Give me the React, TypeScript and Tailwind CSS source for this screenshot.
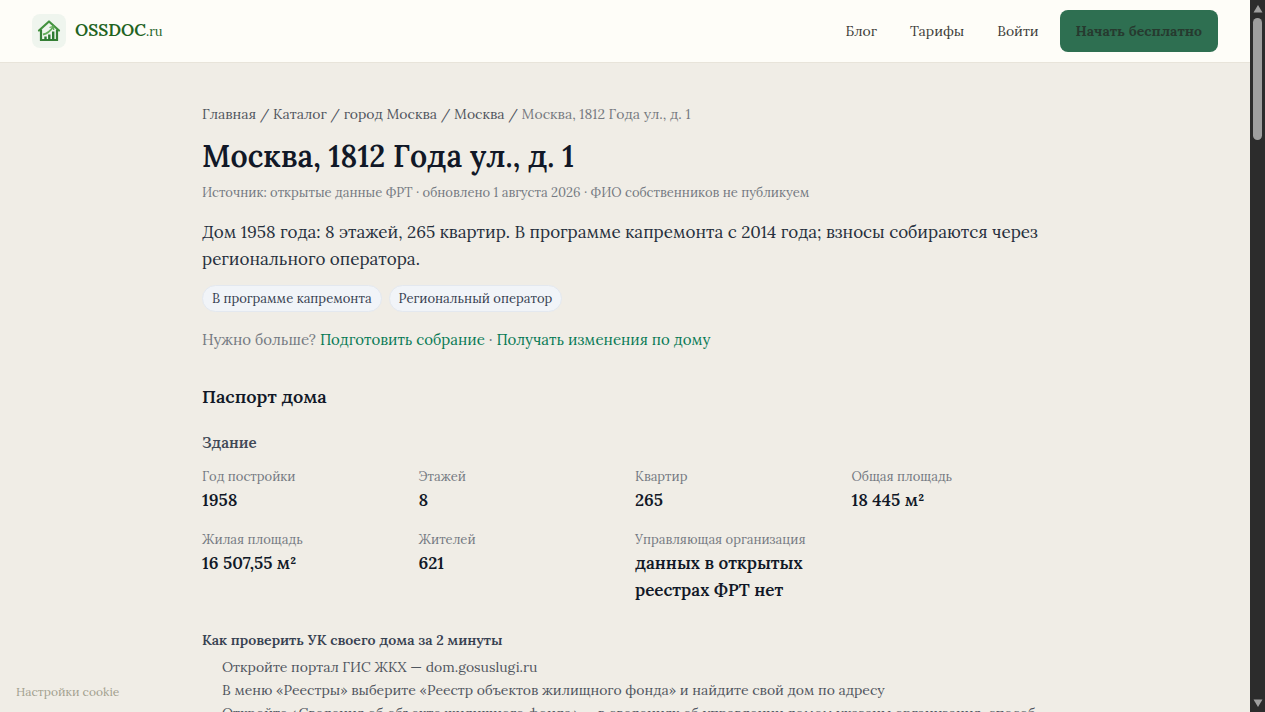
const navLinks = [
    { label: "Блог", href: "#blog" },
    { label: "Тарифы", href: "#pricing" },
    { label: "Войти", href: "#login" },
];

const crumbs = [
    { label: "Главная", href: "#home" },
    { label: "Каталог", href: "#catalog" },
    { label: "город Москва", href: "#region" },
    { label: "Москва", href: "#city" },
];

const tags = ["В программе капремонта", "Региональный оператор"];

const facts = [
    { label: "Год постройки", value: "1958" },
    { label: "Этажей", value: "8" },
    { label: "Квартир", value: "265" },
    { label: "Общая площадь", value: "18 445 м²" },
    { label: "Жилая площадь", value: "16 507,55 м²" },
    { label: "Жителей", value: "621" },
    { label: "Управляющая организация", value: "данных в открытых реестрах ФРТ нет" },
];

const steps = [
    "Откройте портал ГИС ЖКХ — dom.gosuslugi.ru",
    "В меню «Реестры» выберите «Реестр объектов жилищного фонда» и найдите свой дом по адресу",
    "Откройте «Сведения об объекте жилищного фонда» — в сведениях об управлении домом указаны организация, способ",
];

const Logo = () => (
    <a href="#home" className="flex items-center gap-[9px]">
        <span className="flex size-[34px] items-center justify-center rounded-lg bg-[#eff5ee]">
            <svg viewBox="0 0 24 24" className="size-6" fill="none" aria-hidden="true">
                <path d="M2 11.500 12 2.500l10 9" stroke="#43923f" strokeWidth="2.200" strokeLinejoin="round" strokeLinecap="round" />
                <path d="M4 10.500v10.500h16V10.500" stroke="#357f35" strokeWidth="2.200" />
                <path d="M8.500 21v-3.500M12.300 21v-5.500M16.200 21v-8.500" stroke="#2d7a31" strokeWidth="2.400" />
                <path d="M6 15.500c4-.8 7.500-3.500 10.500-8" stroke="#63ad5a" strokeWidth="1.800" />
                <path d="m12.500 8.500 4-1.200.2 3.700" stroke="#63ad5a" strokeWidth="1.300" />
            </svg>
        </span>
        <span className="text-[17px] leading-6 font-semibold text-[#22631f]">
            OSSDOC<span className="text-[13px] font-normal">.ru</span>
        </span>
    </a>
);

const Header = () => (
    <header className="flex h-[63px] shrink-0 items-center justify-between border-b border-[#e8e4da] bg-[#fefdf8] px-8">
        <Logo />
        <nav className="flex items-center text-[14px] text-[#3d3d3a]">
            {navLinks.map((l) => (
                <a key={l.label} href={l.href} className="mr-[33px] last-of-type:mr-0">
                    {l.label}
                </a>
            ))}
            <button className="ml-[21px] h-[42px] rounded-lg bg-[#2e6f51] px-4 font-bold text-[#263a2f]">
                Начать бесплатно
            </button>
        </nav>
    </header>
);

// Dark scroll rail along the right edge of the window
const ScrollRail = () => (
    <div className="flex w-[15px] shrink-0 flex-col items-center bg-[#2c2c2c] py-1" aria-hidden="true">
        <svg viewBox="0 0 10 10" className="size-2.5" fill="#9f9f9f">
            <path d="M5 1 9.500 8.500h-9z" />
        </svg>
        <div className="mt-1 h-[122px] w-[9px] rounded-full bg-[#9f9f9f]" />
        <svg viewBox="0 0 10 10" className="mt-auto size-2.5" fill="#9f9f9f">
            <path d="M5 9 .5 1.500h9z" />
        </svg>
    </div>
);

const App = () => (
    <div className="flex h-screen overflow-hidden bg-[#f0ede6] font-['Lora','Liberation_Serif',serif]">
        <div className="relative flex min-w-0 flex-1 flex-col overflow-hidden">
            <Header />

            <main className="mx-auto w-full max-w-[846px] pt-[39px]">
                <nav className="text-[14px] leading-6 text-[#767a80]">
                    {crumbs.map((c) => (
                        <span key={c.label} className="text-[#50565e]">
                            <a href={c.href}>{c.label}</a>
                            {" / "}
                        </span>
                    ))}
                    <span>Москва, 1812 Года ул., д. 1</span>
                </nav>

                <h1 className="mt-[11px] text-[30px] leading-[38px] font-semibold text-[#111827]">
                    Москва, 1812 Года ул., д. 1
                </h1>
                <p className="mt-2 text-[13px] leading-5 text-[#757a82]">
                    Источник: открытые данные ФРТ · обновлено 1 августа 2026 · ФИО собственников не публикуем
                </p>

                <p className="mt-4 text-[17px] leading-[27px] text-[#27303d]">
                    Дом 1958 года: 8 этажей, 265 квартир. В программе капремонта с 2014 года; взносы собираются через
                    регионального оператора.
                </p>

                <div className="mt-3 flex gap-[7px]">
                    {tags.map((t) => (
                        <span
                            key={t}
                            className="rounded-full border border-[#e3e8ef] bg-[#f1f4f8] px-[9px] text-[13px] leading-[25px] text-[#374151]"
                        >
                            {t}
                        </span>
                    ))}
                </div>

                <p className="mt-4 text-[15px] leading-6 text-[#757a82]">
                    Нужно больше?{" "}
                    <a href="#meeting" className="text-[#087a55]">Подготовить собрание</a>
                    {" · "}
                    <a href="#updates" className="text-[#087a55]">Получать изменения по дому</a>
                </p>

                {/* House passport */}
                <h2 className="mt-[31px] text-[18px] leading-7 font-semibold text-[#111827]">Паспорт дома</h2>
                <h3 className="mt-5 text-[15px] leading-6 font-semibold text-[#414956]">Здание</h3>
                <dl className="mt-3 grid grid-cols-4 gap-x-5 gap-y-4">
                    {facts.map((f) => (
                        <div key={f.label}>
                            <dt className="text-[13px] leading-5 whitespace-nowrap text-[#757a82]">{f.label}</dt>
                            <dd className="text-[17px] leading-[27px] font-semibold text-[#111827]">{f.value}</dd>
                        </div>
                    ))}
                </dl>

                <h4 className="mt-6 text-[14px] leading-6 font-semibold text-[#374151]">
                    Как проверить УК своего дома за 2 минуты
                </h4>
                <ol className="mt-1 pl-5 text-[14px] leading-[23px] text-[#50565f]">
                    {steps.map((s) => (
                        <li key={s}>{s}</li>
                    ))}
                </ol>
            </main>

            <button className="absolute bottom-2.5 left-4 text-[12px] leading-5 text-[#a3a18f]">
                Настройки cookie
            </button>
        </div>
        <ScrollRail />
    </div>
);

export default App;
